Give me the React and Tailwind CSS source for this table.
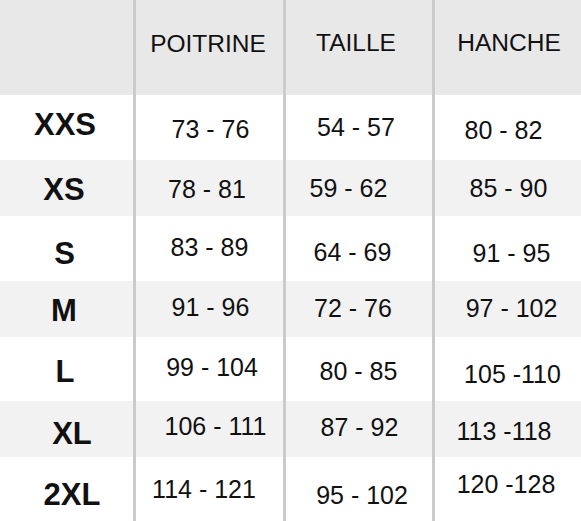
const headers = [
  { t: "POITRINE", c: "-translate-x-[1.5px] -translate-y-[3.5px]" },
  { t: "TAILLE", c: "-translate-x-[3px] -translate-y-[4.5px]" },
  { t: "HANCHE", c: "translate-x-[1px] -translate-y-[4.5px]" },
];

// each row: label + three measures, with small nudges to follow the original
const rows = [
  {
    size: { t: "XXS", c: "-translate-x-[1.5px] -translate-y-[3px]" },
    h: "h-[65px]",
    bg: "bg-white",
    cells: [
      { t: "73 - 76", c: "translate-x-[1px] translate-y-[1.5px]" },
      { t: "54 - 57", c: "-translate-x-[3px]" },
      { t: "80 - 82", c: "-translate-x-[4.5px] translate-y-[3px]" },
    ],
  },
  {
    size: { t: "XS", c: "-translate-x-[2.5px] translate-y-[0.5px]" },
    h: "h-[56px]",
    bg: "bg-[#f2f2f2]",
    cells: [
      { t: "78 - 81", c: "-translate-x-[2.5px] translate-y-[0.5px]" },
      { t: "59 - 62", c: "-translate-x-[10.5px]" },
      { t: "85 - 90", c: "translate-x-[0.5px]" },
    ],
  },
  {
    size: { t: "S", c: "-translate-x-[2px] translate-y-[5px]" },
    h: "h-[65px]",
    bg: "bg-white",
    cells: [
      { t: "83 - 89", c: "-translate-y-[1.5px]" },
      { t: "64 - 69", c: "-translate-x-[6.5px] translate-y-[3.5px]" },
      { t: "91 - 95", c: "translate-x-[3.5px] translate-y-[4.5px]" },
    ],
  },
  {
    size: { t: "M", c: "-translate-x-[2.5px] translate-y-[0.5px]" },
    h: "h-[56px]",
    bg: "bg-[#f2f2f2]",
    cells: [
      { t: "91 - 96", c: "translate-x-[1px] -translate-y-[2px]" },
      { t: "72 - 76", c: "-translate-x-[6px] -translate-y-[1.5px]" },
      { t: "97 - 102", c: "translate-x-[3.5px] -translate-y-[1.5px]" },
    ],
  },
  {
    size: { t: "L", c: "-translate-x-[1.5px] translate-y-[2px]" },
    h: "h-[64px]",
    bg: "bg-white",
    cells: [
      { t: "99 - 104", c: "translate-x-[2.5px] -translate-y-[2px]" },
      { t: "80 - 85", c: "-translate-x-[0.5px] translate-y-[2px]" },
      { t: "105 -110", c: "translate-x-[4.5px] translate-y-[4.5px]" },
    ],
  },
  {
    size: { t: "XL", c: "translate-x-[5.5px] translate-y-[3.5px]" },
    h: "h-[56px]",
    bg: "bg-[#f2f2f2]",
    cells: [
      { t: "106 - 111", c: "translate-x-[6px] -translate-y-[3.5px]" },
      { t: "87 - 92", c: "translate-x-[0.5px] -translate-y-[2px]" },
      { t: "113 -118", c: "-translate-x-[4px] translate-y-[2px]" },
    ],
  },
  {
    size: { t: "2XL", c: "translate-x-[5.5px] translate-y-[5px]" },
    h: "h-[64px]",
    bg: "bg-white",
    cells: [
      { t: "114 - 121", c: "-translate-x-[5.5px]" },
      { t: "95 - 102", c: "translate-x-[3px] translate-y-[6px]" },
      { t: "120 -128", c: "-translate-x-[2px] -translate-y-[5.5px]" },
    ],
  },
];

const colWidths = ["w-[150px]", "w-[149px]", "flex-1"];

const App = () => {
  return (
    <div
      className="w-[581px] h-[521px] overflow-hidden bg-white text-[#111]"
      style={{ fontFamily: '"Liberation Sans", Arial, sans-serif' }}
    >
      <div className="flex h-[95px] bg-[#e8e8e8]">
        <div className="w-[133px]" />
        {headers.map((hd, i) => (
          <div
            key={hd.t}
            className={`${colWidths[i]} flex items-center justify-center border-l-[3px] border-[#cbcbcb]`}
          >
            <span className={`text-[24.5px] leading-none ${hd.c}`}>{hd.t}</span>
          </div>
        ))}
      </div>
      {rows.map((row) => (
        <div key={row.size.t} className={`flex ${row.h} ${row.bg}`}>
          <div className="w-[133px] flex items-center justify-center">
            <span className={`text-[31px] font-bold leading-none ${row.size.c}`}>
              {row.size.t}
            </span>
          </div>
          {row.cells.map((cell, i) => (
            <div
              key={i}
              className={`${colWidths[i]} flex items-center justify-center border-l-[3px] border-[#cbcbcb]`}
            >
              <span className={`text-[25px] leading-none whitespace-nowrap ${cell.c}`}>
                {cell.t}
              </span>
            </div>
          ))}
        </div>
      ))}
    </div>
  );
};

export default App;
